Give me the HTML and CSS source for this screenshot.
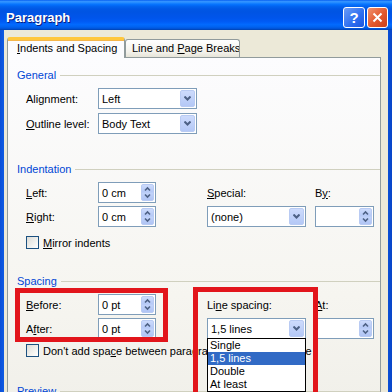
FILE: index.html
```html
<!DOCTYPE html>
<html>
<head>
<meta charset="utf-8">
<link rel="stylesheet" href="styles.css">
</head>
<body>
<div class="window">
  <div class="titlebar">
    <span class="title">Paragraph</span>
    <span class="cbtn help">?</span>
    <span class="cbtn close">
      <svg width="11" height="11" viewBox="0 0 11 11"><path d="M1.5 1.5 L9.5 9.5 M9.5 1.5 L1.5 9.5" stroke="#fff" stroke-width="2" fill="none"/></svg>
    </span>
  </div>

  <div class="client">
    <div class="tabs">
      <div class="tab active"><u>I</u>ndents and Spacing</div>
      <div class="tab">Line and <u>P</u>age Breaks</div>
    </div>

    <div class="panel">
      <!-- General -->
      <div class="legend first"><span>General</span></div>
      <div class="general">
        <label>Ali<u>g</u>nment:</label>
        <div class="combo">Left<span class="drop"><svg width="7" height="5" viewBox="0 0 7 5"><path d="M0.5 0.5 L3.5 3.5 L6.5 0.5" stroke="#4d6185" stroke-width="2" fill="none"/></svg></span></div>
        <label><u>O</u>utline level:</label>
        <div class="combo">Body Text<span class="drop"><svg width="7" height="5" viewBox="0 0 7 5"><path d="M0.5 0.5 L3.5 3.5 L6.5 0.5" stroke="#4d6185" stroke-width="2" fill="none"/></svg></span></div>
      </div>

      <!-- Indentation -->
      <div class="legend"><span>Indentation</span></div>
      <div class="fields">
        <label><u>L</u>eft:</label>
        <div class="spin">0 cm<span class="arrows"><svg width="7" height="13" viewBox="0 0 7 13"><path d="M1 4.5 L3.5 2 L6 4.5 M1 8.5 L3.5 11 L6 8.5" stroke="#4d6185" stroke-width="1.6" fill="none"/></svg></span></div>
        <span></span>
        <label><u>S</u>pecial:</label>
        <span></span>
        <label>B<u>y</u>:</label>

        <label><u>R</u>ight:</label>
        <div class="spin">0 cm<span class="arrows"><svg width="7" height="13" viewBox="0 0 7 13"><path d="M1 4.5 L3.5 2 L6 4.5 M1 8.5 L3.5 11 L6 8.5" stroke="#4d6185" stroke-width="1.6" fill="none"/></svg></span></div>
        <span></span>
        <div class="combo">(none)<span class="drop"><svg width="7" height="5" viewBox="0 0 7 5"><path d="M0.5 0.5 L3.5 3.5 L6.5 0.5" stroke="#4d6185" stroke-width="2" fill="none"/></svg></span></div>
        <span></span>
        <div class="spin"><span class="arrows"><svg width="7" height="13" viewBox="0 0 7 13"><path d="M1 4.5 L3.5 2 L6 4.5 M1 8.5 L3.5 11 L6 8.5" stroke="#4d6185" stroke-width="1.6" fill="none"/></svg></span></div>
      </div>
      <div class="check mirror"><span class="box"></span><span><u>M</u>irror indents</span></div>

      <!-- Spacing -->
      <div class="legend spacing"><span>Spacing</span></div>
      <div class="fields">
        <label><u>B</u>efore:</label>
        <div class="spin">0 pt<span class="arrows"><svg width="7" height="13" viewBox="0 0 7 13"><path d="M1 4.5 L3.5 2 L6 4.5 M1 8.5 L3.5 11 L6 8.5" stroke="#4d6185" stroke-width="1.6" fill="none"/></svg></span></div>
        <span></span>
        <label>Li<u>n</u>e spacing:</label>
        <span></span>
        <label><u>A</u>t:</label>

        <label>A<u>f</u>ter:</label>
        <div class="spin">0 pt<span class="arrows"><svg width="7" height="13" viewBox="0 0 7 13"><path d="M1 4.5 L3.5 2 L6 4.5 M1 8.5 L3.5 11 L6 8.5" stroke="#4d6185" stroke-width="1.6" fill="none"/></svg></span></div>
        <span></span>
        <div class="combo">1,5 lines<span class="drop"><svg width="7" height="5" viewBox="0 0 7 5"><path d="M0.5 0.5 L3.5 3.5 L6.5 0.5" stroke="#4d6185" stroke-width="2" fill="none"/></svg></span></div>
        <span></span>
        <div class="spin"><span class="arrows"><svg width="7" height="13" viewBox="0 0 7 13"><path d="M1 4.5 L3.5 2 L6 4.5 M1 8.5 L3.5 11 L6 8.5" stroke="#4d6185" stroke-width="1.6" fill="none"/></svg></span></div>
      </div>
      <div class="check dontadd"><span class="box"></span><span>Don't add spa<u>c</u>e between paragraphs of the same style</span></div>

      <!-- Preview -->
      <div class="legend preview"><span>Preview</span></div>
    </div>
  </div>

  <ul class="droplist">
    <li>Single</li>
    <li class="sel">1,5 lines</li>
    <li>Double</li>
    <li>At least</li>
  </ul>

  <div class="mark mark-a"></div>
  <div class="mark mark-b"></div>
</div>
</body>
</html>
```

FILE: styles.css
```css
body {
  margin: 0;
  width: 392px;
  height: 392px;
  overflow: hidden;
  font-family: "Liberation Sans", Arial, sans-serif;
  font-size: 11px;
}

.window {
  position: relative;
  width: 392px;
  height: 392px;
  overflow: hidden;
  background: linear-gradient(90deg, #0a4fd8, #1467ee 2%, #0b5be3 98%, #0844c8);
}

/* title bar */
.titlebar {
  height: 30px;
  box-sizing: border-box;
  padding: 5px 4px 0 6px;
  display: flex;
  align-items: center;
  gap: 2px;
  background: linear-gradient(#0058ee 0%, #3593ff 4%, #288eff 8%, #127dff 12%, #036ffc 16%, #0262ee 22%, #0057e5 30%, #0054e3 40%, #0055eb 60%, #005bf5 72%, #026afe 82%, #0062ef 90%, #0052d6 96%, #0040ab 100%);
}

.title {
  color: #fff;
  font-weight: bold;
  font-size: 13px;
  text-shadow: 1px 1px #0a1e80;
  margin-right: auto;
}

.cbtn {
  width: 21px;
  height: 21px;
  box-sizing: border-box;
  border: 1px solid #fff;
  border-radius: 3px;
  display: flex;
  align-items: center;
  justify-content: center;
}

.help {
  width: 22px;
  background: linear-gradient(135deg, #6b9cf6, #2d6ef0 60%, #1c56dd);
  color: #fff;
  font-size: 15px;
  font-weight: bold;
}

.close {
  background: linear-gradient(135deg, #f0916e, #e3572c 55%, #c8401c);
}

/* dialog client */
.client {
  margin: 0 4px;
  height: 362px;
  box-sizing: border-box;
  padding: 7px 7px 0 3px;
  background: #ece9d8;
  display: flex;
  flex-direction: column;
}

.tabs {
  display: flex;
  align-items: flex-end;
  margin-bottom: -1px;
  position: relative;
  z-index: 1;
}

.tab {
  box-sizing: border-box;
  width: 115px;
  height: 18px;
  padding: 2px 0 0 6px;
  border: 1px solid #919b9c;
  border-bottom: none;
  border-radius: 3px 3px 0 0;
  background: linear-gradient(#fff, #f3f2ec 70%, #e6e4d8);
  margin-bottom: 1px;
  white-space: nowrap;
  overflow: hidden;
}

.tab.active {
  width: 118px;
  height: 21px;
  padding: 2px 0 0 9px;
  margin-bottom: 0;
  border-top: 3px solid #ffc73c;
  box-shadow: inset 0 1px #f5b64b;
  background: #fcfcfe;
}

.panel {
  flex: 1;
  border: 1px solid #919b9c;
  border-bottom: none;
  background: linear-gradient(#fcfcfe, #f6f5f0 70%, #f1f0ea);
}

/* group headings */
.legend {
  display: flex;
  align-items: center;
  height: 14px;
  margin: 28px 0 0 9px;
  color: #0046d5;
}

.legend::after {
  content: "";
  flex: 1;
  height: 1px;
  margin-left: 4px;
  background: #d0d0bf;
}

.legend.first { margin-top: 10px; }
.legend.spacing { margin-top: 25px; }
.legend.preview { margin-top: 27px; }

/* field grids */
.general {
  display: grid;
  grid-template-columns: 72px 99px;
  grid-auto-rows: 21px;
  row-gap: 4px;
  align-items: center;
  margin: 6px 0 0 18px;
}

.fields {
  display: grid;
  grid-template-columns: 72px 58px 51px 99px 9px 59px;
  grid-auto-rows: 21px;
  row-gap: 3px;
  align-items: center;
  margin: 6px 0 0 18px;
}

.combo, .spin {
  height: 21px;
  box-sizing: border-box;
  border: 1px solid #7f9db9;
  background: #fff;
  display: flex;
  align-items: center;
  padding-left: 3px;
}

.drop {
  margin-left: auto;
  margin-right: 1px;
  width: 15px;
  height: 17px;
  box-sizing: border-box;
  border: 1px solid #b9cbf3;
  border-radius: 2px;
  background: linear-gradient(#cddbfc, #b4c8f6);
  display: flex;
  align-items: center;
  justify-content: center;
}

.arrows {
  margin-left: auto;
  margin-right: 1px;
  width: 13px;
  height: 17px;
  box-sizing: border-box;
  border: 1px solid #b9cbf3;
  border-radius: 2px;
  background: linear-gradient(#cddbfc, #b4c8f6 48%, #c2d3fa 52%, #b0c4f4);
  display: flex;
  align-items: center;
  justify-content: center;
}

/* checkboxes */
.check {
  display: flex;
  align-items: center;
  gap: 4px;
  height: 13px;
  margin-left: 18px;
  white-space: nowrap;
}

.check.mirror { margin-top: 9px; }
.check.dontadd { margin-top: 5px; }

.box {
  width: 13px;
  height: 13px;
  box-sizing: border-box;
  border: 1px solid #1c5180;
  background: linear-gradient(135deg, #dcdcd7, #f6f6f3 70%, #fff);
}

/* open drop-down list */
.droplist {
  position: absolute;
  left: 207px;
  top: 338px;
  width: 99px;
  margin: 0;
  padding: 0;
  list-style: none;
  box-sizing: border-box;
  border: 1px solid #000;
  background: #fff;
}

.droplist li {
  height: 13px;
  line-height: 13px;
  padding-left: 2px;
}

.droplist li.sel {
  background: #316ac5;
  color: #fff;
}

/* red highlight boxes */
.mark {
  position: absolute;
  border: 5px solid #e2151b;
  box-sizing: border-box;
}

.mark-a {
  left: 15px;
  top: 288px;
  width: 153px;
  height: 54px;
}

.mark-b {
  left: 193px;
  top: 287px;
  width: 125px;
  height: 130px;
}
```
